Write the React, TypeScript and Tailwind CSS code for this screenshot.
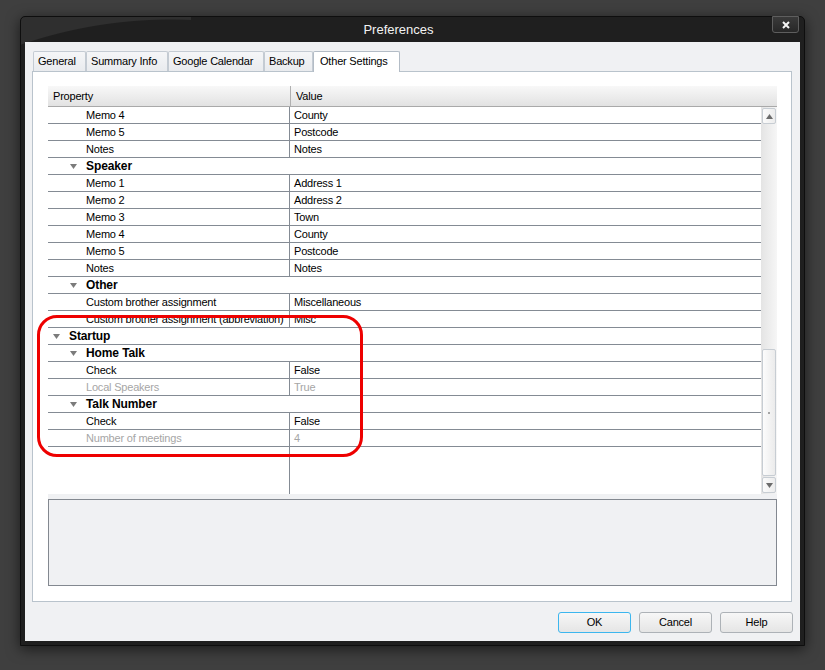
type Row =
  | { kind: "cat"; level: 1 | 2; label: string }
  | { kind: "prop"; name: string; value: string; disabled?: boolean };

const rows: Row[] = [
  { kind: "prop", name: "Memo 4", value: "County" },
  { kind: "prop", name: "Memo 5", value: "Postcode" },
  { kind: "prop", name: "Notes", value: "Notes" },
  { kind: "cat", level: 2, label: "Speaker" },
  { kind: "prop", name: "Memo 1", value: "Address 1" },
  { kind: "prop", name: "Memo 2", value: "Address 2" },
  { kind: "prop", name: "Memo 3", value: "Town" },
  { kind: "prop", name: "Memo 4", value: "County" },
  { kind: "prop", name: "Memo 5", value: "Postcode" },
  { kind: "prop", name: "Notes", value: "Notes" },
  { kind: "cat", level: 2, label: "Other" },
  { kind: "prop", name: "Custom brother assignment", value: "Miscellaneous" },
  { kind: "prop", name: "Custom brother assignment (abbreviation)", value: "Misc" },
  { kind: "cat", level: 1, label: "Startup" },
  { kind: "cat", level: 2, label: "Home Talk" },
  { kind: "prop", name: "Check", value: "False" },
  { kind: "prop", name: "Local Speakers", value: "True", disabled: true },
  { kind: "cat", level: 2, label: "Talk Number" },
  { kind: "prop", name: "Check", value: "False" },
  { kind: "prop", name: "Number of meetings", value: "4", disabled: true },
];

const tabs = [
  { label: "General", w: "w-[53px]" },
  { label: "Summary Info", w: "w-[82px]" },
  { label: "Google Calendar", w: "w-[96px]" },
  { label: "Backup", w: "w-[49px]" },
  { label: "Other Settings", w: "w-[87px]", active: true },
];

const Arrow = ({ up }: { up?: boolean }) => (
  <svg width="7" height="5" viewBox="0 0 7 5">
    <polygon points={up ? "0,5 7,5 3.5,0" : "0,0 7,0 3.5,5"} fill="#6b6b6b" />
  </svg>
);

const Expander = () => (
  <svg width="7" height="5" viewBox="0 0 7 5">
    <polygon points="0,0 7,0 3.5,5" fill="#7b7b7b" />
  </svg>
);

function GridRow({ row }: { row: Row }) {
  if (row.kind === "cat") {
    return (
      <div
        className={`flex items-center h-[17px] border-b border-[#848b94] ${
          row.level === 1 ? "pl-[5px]" : "pl-[22px]"
        }`}
      >
        <span className="w-[16px] flex items-center">
          <Expander />
        </span>
        <span className="font-bold text-[12px] tracking-[-0.1px] text-black">{row.label}</span>
      </div>
    );
  }
  const color = row.disabled ? "text-[#a6a6a6]" : "text-black";
  return (
    <div className={`flex h-[17px] border-b border-[#848b94] ${color}`}>
      <div className="w-[242px] shrink-0 border-r border-[#848b94] pl-[38px] leading-[16px] whitespace-nowrap overflow-hidden">
        {row.name}
      </div>
      <div className="flex-1 pl-[4px] leading-[16px]">{row.value}</div>
    </div>
  );
}

function Button({ label, primary }: { label: string; primary?: boolean }) {
  return (
    <button
      className={`w-[73px] h-[21px] rounded-[3px] border bg-[linear-gradient(to_bottom,#f7f7f7,#e5e5e5)] text-[11px] text-black leading-[19px] ${
        primary ? "border-[#3cb6ee]" : "border-[#adb2b7]"
      }`}
    >
      {label}
    </button>
  );
}

export default function App() {
  return (
    <div className="relative w-[825px] h-[670px] overflow-hidden bg-[#3f3f3f] pl-[20px] pt-[16px] font-['Liberation_Sans',Arial,sans-serif] tracking-[-0.2px] text-[11px]">
      {/* window frame */}
      <div className="w-[785px] h-[630px] flex flex-col px-[4px] pb-[4px] border border-[#0e0e0e] rounded-t-[5px] bg-[#1f1f1f] bg-[radial-gradient(circle_462px_at_150px_464px,#1f1f1f_461px,#2f2f2f_462px)] bg-[length:170px_32px] bg-no-repeat shadow-[0_3px_14px_rgba(0,0,0,0.6)]">
        <div className="h-[25px] flex shrink-0">
          <div className="flex-1 flex items-center justify-center text-[13px] tracking-normal text-[#f2f2f2] pt-[1px]">
            Preferences
          </div>
          <div className="w-[27px] h-[17px] -mt-[1px] mr-[1px] flex items-center justify-center rounded-b-[3px] border border-[#5e5e5e] bg-[linear-gradient(to_bottom,#3a3a3a,#272727)]">
            <svg width="8" height="8" viewBox="0 0 8 8">
              <path d="M1 1 L7 7 M7 1 L1 7" stroke="#f4f4f4" strokeWidth="2" />
            </svg>
          </div>
        </div>

        {/* client area */}
        <div className="flex-1 flex flex-col bg-[#f0f1f3] pt-[9px] pl-[7px] pr-[8px]">
          <div className="relative z-10 flex items-end h-[20px] pl-[1px]">
            {tabs.map((t) =>
              t.active ? (
                <div
                  key={t.label}
                  className={`${t.w} h-[21px] -mb-[1px] pl-[6px] pt-[1px] bg-white border border-b-0 border-[#b3bcc6] rounded-t-[2px] leading-[16px] text-black whitespace-nowrap`}
                >
                  {t.label}
                </div>
              ) : (
                <div
                  key={t.label}
                  className={`${t.w} h-[20px] pl-[4px] pt-[1px] border border-b-0 border-[#c4cbd3] bg-[linear-gradient(to_bottom,#f5f6f8,#e9ebee)] rounded-t-[2px] leading-[16px] text-black whitespace-nowrap`}
                >
                  {t.label}
                </div>
              )
            )}
          </div>

          <div className="h-[531px] flex flex-col border border-[#b9c3cc] bg-white pt-[14px] pl-[15px] pr-[14px] pb-[15px]">
            {/* property grid */}
            <div className="flex flex-col h-[408px]">
              <div className="flex h-[21px] shrink-0 border-b border-[#a9a9a9] bg-[linear-gradient(to_bottom,#f8f8f8,#e2e2e2)] text-black">
                <div className="w-[243px] border-r border-[#b0b0b0] pl-[5px] leading-[20px]">Property</div>
                <div className="flex-1 pl-[5px] leading-[20px]">Value</div>
              </div>
              <div className="flex flex-1">
                <div className="flex-1 flex flex-col">
                  {rows.map((r, i) => (
                    <GridRow key={i} row={r} />
                  ))}
                  <div className="flex-1 flex">
                    <div className="w-[242px] border-r border-[#848b94]" />
                  </div>
                </div>
                <div className="w-[16px] flex flex-col pl-[1px] pr-[1px] bg-[linear-gradient(to_right,#e4e4e4,#f6f6f6)]">
                  <div className="mt-[1px] h-[16px] flex items-center justify-center rounded-[2px] border border-[#c7cdd3] bg-[linear-gradient(to_right,#fbfbfb,#ececec)]">
                    <Arrow up />
                  </div>
                  <div className="flex-1" />
                  <div className="h-[127px] flex items-center justify-center rounded-[2px] border border-[#c7cdd3] bg-[linear-gradient(to_right,#fcfcfc,#ebebeb)]">
                    <div className="w-[2px] h-[2px] bg-[#a5a5a5]" />
                  </div>
                  <div className="mt-[1px] mb-[1px] h-[16px] flex items-center justify-center rounded-[2px] border border-[#c7cdd3] bg-[linear-gradient(to_right,#fbfbfb,#ececec)]">
                    <Arrow />
                  </div>
                </div>
              </div>
            </div>
            {/* description pane */}
            <div className="h-[92px] pt-[5px] bg-[#f0f1f3]">
              <div className="h-[87px] border border-[#838890] bg-[#f0f1f3]" />
            </div>
          </div>

          <div className="flex justify-end gap-[8px] mt-[10px] -mr-[1px]">
            <Button label="OK" primary />
            <Button label="Cancel" />
            <Button label="Help" />
          </div>
        </div>
      </div>

      {/* red highlight around the Startup section */}
      <div className="absolute left-[37px] top-[315px] w-[326px] h-[142px] rounded-[20px] border-[3px] border-[#ee0000] pointer-events-none" />
    </div>
  );
}
